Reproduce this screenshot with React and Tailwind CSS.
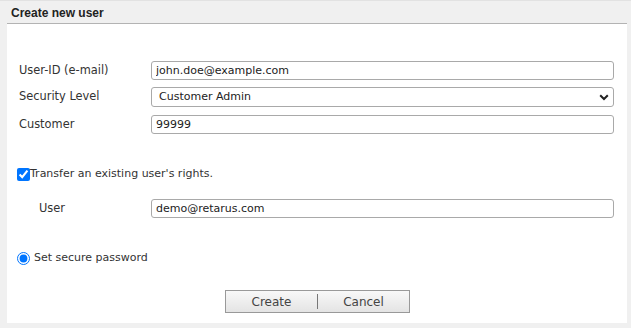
import React from 'react';

const Field = ({ label, children, indent }) => (
  <div className="flex items-start">
    <label className={`${indent ? 'pl-[20px] w-[132px]' : 'w-[132px]'} pt-[2px] leading-[14px] text-[11.4px] text-[#333]`}>{label}</label>
    {children}
  </div>
);

const inputCls =
  'w-[463px] h-[19px] px-[4px] border border-[#a9a9a9] rounded-[3px] bg-white text-[11px] text-[#222] leading-[17px] outline-none';

const App = () => {
  return (
    <div
      className="w-[631px] h-[328px] bg-[#f0f0f0] border-t border-[#e2e2e2] flex flex-col"
      style={{ fontFamily: '"DejaVu Sans", Verdana, sans-serif' }}
    >
      <div className="h-[22px] pl-[11px] pt-[3px] text-[12px] font-bold text-[#222]" style={{ fontFamily: '"Liberation Sans", Arial, sans-serif' }}>
        Create new user
      </div>
      <div className="ml-[7px] w-[620px] h-[300px] bg-white border-t border-[#b3b3b3] text-[11px] text-[#333] pl-[12px] pt-[37px] flex flex-col">
        <div className="flex flex-col gap-[7px]">
          <Field label="User-ID (e-mail)">
            <input className={inputCls} defaultValue="john.doe@example.com" />
          </Field>
          <Field label="Security Level">
            <div className="relative w-[463px] h-[20px] border border-[#a9a9a9] rounded-[3px] bg-white pl-[7px] leading-[18px] text-[#222]">
              Customer Admin
              <svg className="absolute right-[4px] top-[6px]" width="10" height="7" viewBox="0 0 10 7">
                <path d="M1.2 1.2 L5 5 L8.8 1.2" fill="none" stroke="#222" strokeWidth="2" />
              </svg>
            </div>
          </Field>
          <div className="pt-[1px]">
            <Field label="Customer">
              <input className={inputCls} defaultValue="99999" />
            </Field>
          </div>
        </div>

        <label className="mt-[34px] ml-[-2px] flex items-center h-[13px] text-[#333]">
          <input type="checkbox" defaultChecked className="w-[13px] h-[13px] m-0" />
          <span>Transfer an existing user's rights.</span>
        </label>

        <div className="mt-[18px]">
          <Field label="User" indent>
            <input className={inputCls} defaultValue="demo@retarus.com" />
          </Field>
        </div>

        <label className="mt-[34px] ml-[-2px] flex items-center gap-[4px] h-[13px] text-[#333]">
          <input type="radio" name="pw" defaultChecked className="w-[13px] h-[13px] m-0" />
          <span>Set secure password</span>
        </label>

        <div className="mt-[25px] ml-[206px] flex w-[185px] h-[23px] border border-[#999] bg-gradient-to-b from-[#f8f8f8] to-[#e4e4e4] text-[12px] text-[#444]">
          <button className="flex-1 flex items-center justify-center">Create</button>
          <div className="w-[1px] my-[3px] bg-[#777]" />
          <button className="flex-1 flex items-center justify-center">Cancel</button>
        </div>
      </div>
    </div>
  );
};

export default App;
